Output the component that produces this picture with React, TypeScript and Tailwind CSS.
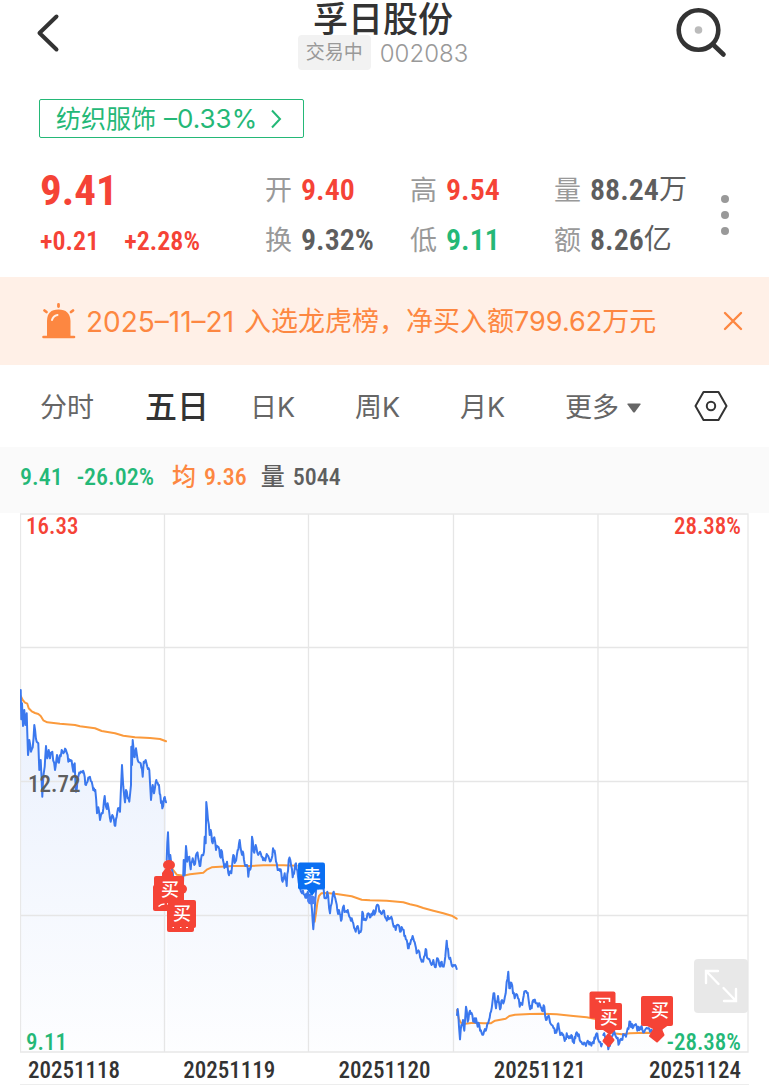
import React from "react";

type Point = [number, number];

const NUM = "font-['Liberation_Sans_Narrow','Roboto_Condensed','Roboto','Noto_Sans_CJK_SC',sans-serif]";

/* Points are stored in thirds of a chart unit, relative to an origin. */
function series(ox: number, oy: number, raw: string): Point[] {
  return raw
    .trim()
    .split(/\s+/)
    .map((pair) => {
      const [x, y] = pair.split(",").map(Number);
      return [ox + x / 3, oy + y / 3] as Point;
    });
}

function toPath(points: Point[]): string {
  return points.map(([x, y], i) => `${i ? "L" : "M"}${x.toFixed(1)} ${y.toFixed(1)}`).join("");
}

/* Adds tick-level movement between the recorded turning points. */
function withTicks(points: Point[], seed: number): Point[] {
  let s = seed;
  const next = () => {
    s = (s * 16807) % 2147483647;
    return s / 2147483647 - 0.5;
  };
  const out: Point[] = [points[0]];
  for (let i = 1; i < points.length; i++) {
    const [x0, y0] = points[i - 1];
    const [x1, y1] = points[i];
    const steps = Math.max(1, Math.round((x1 - x0) / 0.8));
    for (let k = 1; k < steps; k++) {
      const t = k / steps;
      out.push([x0 + (x1 - x0) * t, y0 + (y1 - y0) * t + next() * 7]);
    }
    out.push([x1, y1]);
  }
  return out;
}

const PRICE: Point[][] = [
  series(0, 670, "62,60 64,148 66,100 69,168 73,120 76,165 80,130 84,255 88,210 93,245 98,232 103,165 110,215 115,220 118,300 122,270 127,380 131,310 134,290 138,228 142,265 146,240 150,265 157,245 165,300 171,255 177,278 185,240 198,240 205,275 212,270 220,305 224,280 228,365 235,320 245,305 252,310 258,345 267,322 275,335 280,360 286,360 291,430 295,412 300,450 308,430 314,378 318,410 325,410 332,455 337,435 344,467 350,440 354,415 360,425 366,285 370,350 375,397 378,360 383,385 388,395 393,345 394,230 396,285 398,210 402,260 408,235 415,275 422,280 428,320 431,275 437,270 442,290 448,300 453,390 458,345 462,370 469,330 475,345 481,375 487,415 492,385 498,397"),
  series(150, 780, "50,240 54,157 58,245 61,225 66,270 72,310 84,330 99,310 101,240 104,285 108,198 112,245 118,230 122,268 128,235 133,255 140,220 145,235 151,258 157,225 162,215 164,170 167,190 169,66 174,120 179,165 182,150 188,190 193,172 198,210 205,200 210,228 216,215 221,250 228,260 231,245 237,286 244,280 250,225 256,245 263,210 269,180 274,215 280,220 286,258 291,255 295,290 299,265 303,260 306,170 311,215 317,195 322,218 330,215 337,230 344,240 350,222 357,235 365,235 369,205 376,225 380,250 386,270 392,268 398,305 404,280 410,318 416,240 421,240 428,292 434,265 438,250 444,290 450,320 456,340 464,345 480,345"),
  series(300, 850, "30,135 36,180 40,238 46,150 50,110 60,100 68,110 76,145 82,125 90,190 95,160 101,125 106,145 112,180 119,190 123,212 129,172 136,185 143,180 148,200 155,205 160,220 167,245 171,230 177,250 184,240 187,185 193,210 200,205 205,190 212,200 219,185 225,190 231,165 238,185 245,192 252,182 258,205 266,208 274,200 281,230 287,240 295,225 300,245 307,235 313,258 320,270 326,295 333,270 340,265 346,285 350,310 358,305 365,335 372,320 377,297 383,325 392,340 400,330 407,352 411,325 418,345 425,335 431,350 436,320 440,272 446,320 453,335 460,345 470,357"),
  series(440, 940, "51,225 53,207 57,260 60,298 64,255 69,240 73,272 78,200 83,245 90,212 97,225 102,245 108,235 113,260 118,255 125,280 132,275 140,262 147,240 153,215 158,180 163,160 168,205 174,168 180,208 186,180 192,185 197,160 200,125 205,95 208,145 214,128 219,160 224,175 229,162 234,175 239,200 247,195 253,155 263,158 268,195 275,205 280,180 287,190 294,200 300,195 306,212 313,200 318,240 324,230 328,235 335,255 343,265 349,278 355,250 361,285 367,285 374,303 380,280 387,295 394,285 400,305 406,295 412,280 419,300 427,312 435,310 443,302 452,312 461,310 470,280 476,302 486,312"),
  series(580, 940, "70,285 78,300 85,328 92,300 100,280 108,290 118,310 125,300 132,285 138,290 143,265 151,245 158,265 165,255 172,272 180,262 187,268 195,270 210,275 225,280 240,270 248,262"),
];

const AVERAGE: Point[][] = [
  series(0, 670, "62,78 68,90 75,98 82,101 86,115 95,124 105,129 115,132 122,138 130,151 142,157 180,161 225,165 240,169 285,175 305,183 345,190 370,197 405,202 450,204 480,207 498,214"),
  series(150, 780, "55,250 70,270 80,284 100,287 120,283 160,278 172,268 185,262 210,260 250,258 300,258 340,256 400,256 440,257"),
  series(300, 850, "44,215 48,190 52,160 57,138 64,130 80,129 110,132 155,139 185,149 210,151 260,152 310,157 330,163 350,167 370,174 400,182 430,190 455,197 470,206"),
  series(440, 940, "51,210 56,235 62,248 75,251 100,248 130,250 152,250 165,242 197,236 208,228 225,224 270,222 310,221 350,223 400,228 440,232 470,238"),
  series(580, 940, "80,272 100,280 125,283 150,280 200,278 225,280"),
];

const TICKS = PRICE.map((p, i) => withTicks(p, 911 + i * 77));

const RED = "#f54336";
const BLUE = "#0a6ff2";

function Pin({ x, y, w = 27, h = 27, color = RED }: { x: number; y: number; w?: number; h?: number; color?: string }) {
  return <rect x={x} y={y} width={w} height={h} rx="2" fill={color} />;
}

function PinLabel({ x, y, children }: { x: number; y: number; children: string }) {
  return (
    <text x={x} y={y} textAnchor="middle" fill="#fff" fontSize="18" fontWeight="500">
      {children}
    </text>
  );
}

function Chart() {
  return (
    <svg viewBox="20 513 729 540" className="block w-full" role="img" aria-label="五日走势">
      <defs>
        <linearGradient id="area" gradientUnits="userSpaceOnUse" x1="0" y1="690" x2="0" y2="1052">
          <stop offset="0" stopColor="#3b78ee" stopOpacity="0.11" />
          <stop offset="1" stopColor="#3b78ee" stopOpacity="0.01" />
        </linearGradient>
      </defs>
      {TICKS.map((p, i) => (
        <path key={i} d={`${toPath(p)}L${p[p.length - 1][0]} 1052L${p[0][0]} 1052Z`} fill="url(#area)" />
      ))}
      <g stroke="#e6e6e6" strokeWidth="1.3" fill="none">
        <path d="M20 647.5H748M20 781.5H748M20 915.5H748M164.5 514V1052M308.5 514V1052M453.5 514V1052M598 514V1052" />
        <path d="M20.5 514H748V1052H20.5Z" stroke="#e8e8e8" />
      </g>
      <g fill="none" strokeLinejoin="round" strokeLinecap="round">
        {AVERAGE.map((p, i) => (
          <path key={i} d={toPath(p)} stroke="#fb9a3c" strokeWidth="2" />
        ))}
        {TICKS.map((p, i) => (
          <path key={i} d={toPath(p)} stroke="#3b78ee" strokeWidth="2" />
        ))}
      </g>
      <g fill={RED}>
        <ellipse cx="169" cy="865" rx="6" ry="5" />
        <path d="M162 878V873L165 869H170L173 873V878Z" />
        <circle cx="182.500" cy="889" r="4.500" />
        <Pin x={153} y={885} w={24} h={26} />
        <Pin x={154} y={876} w={30} h={29} />
        <PinLabel x={170} y={896}>买</PinLabel>
        <path d="M158.500 906.500Q161 904 164.500 904M167 904H168.500" stroke="#fff" strokeWidth="1.400" fill="none" />
        <Pin x={167} y={904} w={27} h={28} />
        <Pin x={168} y={900} w={28} h={28} />
        <PinLabel x={182} y={920}>买</PinLabel>
        <path d="M172.500 927.500H174M180 927.500H181.500M186 927.500H188" stroke="#fff" strokeWidth="1" />
      </g>
      <g>
        <path d="M306 888H318L312 896Z" fill={BLUE} />
        <circle cx="311.500" cy="900" r="4.500" fill="#4a80f4" />
        <Pin x={298} y={862.5} color={BLUE} />
        <PinLabel x={312} y={882.5}>卖</PinLabel>
      </g>
      <g fill={RED}>
        <path d="M599 1027H619L610 1035Z" />
        <path d="M608.500 1035L613 1040L608.500 1045.500L604 1041Z" stroke={RED} strokeLinejoin="round" strokeWidth="3" />
        <Pin x={589.5} y={991.5} w={26} h={27} />
        <path d="M595.500 998.500H609.500V1002M599 1001L601 1002.500M604 1001V1003" stroke="#fff" strokeWidth="1.600" fill="none" />
        <Pin x={595} y={1003} w={27} h={27} />
        <PinLabel x={609} y={1024}>买</PinLabel>
        <path d="M643 1024H670L659 1032Z" />
        <path d="M650 1036L654 1029.500H661L663.500 1035L657 1041.500Z" stroke={RED} strokeLinejoin="round" strokeWidth="2" />
        <Pin x={641} y={996} w={32} h={30} />
        <PinLabel x={660} y={1017}>买</PinLabel>
      </g>
    </svg>
  );
}

function Quote({ label, value, unit, tone }: { label: string; value: string; unit?: string; tone: string }) {
  return (
    <div className="flex h-[50px] items-center gap-[9px] whitespace-nowrap">
      <dt className="pt-0.5 text-[27px] text-[#999]">{label}</dt>
      <dd className={`flex items-center pb-0.5 text-[30px] font-semibold ${NUM} ${tone}`}>
        {value}
        {unit && <span className="pt-0.5 text-[28px] font-normal">{unit}</span>}
      </dd>
    </div>
  );
}

const TABS = ["分时", "五日", "日K", "周K", "月K"];
const DATES = ["20251118", "20251119", "20251120", "20251121", "20251124"];

export default function App() {
  return (
    <main className="w-full bg-white font-['Inter','Noto_Sans_CJK_SC',sans-serif] text-[#333]">
      <header className="flex items-start justify-between pr-[42px] pl-9">
        <button aria-label="返回" className="w-[55px] pt-3">
          <svg width="26" height="42" viewBox="0 0 26 42" fill="none" stroke="#333" strokeWidth="4" strokeLinecap="round" strokeLinejoin="round">
            <path d="M20.500 4.500L3.500 21L20.500 37.500" />
          </svg>
        </button>
        <div className="flex flex-col items-center">
          <h1 className="h-[35px] text-[35px] leading-[38px] font-medium">孚日股份</h1>
          <div className="flex items-center gap-[9px] text-[#999]">
            <span className="flex h-[35px] items-center rounded-[4px] bg-[#f2f2f2] px-2 pt-0.5 text-[19px]">交易中</span>
            <span className="pt-0.5 text-2xl font-light">002083</span>
          </div>
        </div>
        <button aria-label="搜索" className="pt-1.5">
          <svg width="52" height="54" viewBox="0 0 52 54" fill="none" stroke="#333" strokeWidth="4.600">
            <circle cx="23.500" cy="24" r="19.800" />
            <path d="M38 38.500L48.500 48.500" strokeLinecap="round" />
            <circle cx="23.500" cy="24" r="3.800" fill="#bbb" stroke="none" />
          </svg>
        </button>
      </header>

      <button className="mt-[29px] ml-[39px] flex h-[39px] items-center gap-2 rounded-[2px] border border-solid border-[#24b877] pr-[18px] pl-4 text-[25px] text-[#24b877]">
        <span className="pt-0.5">纺织服饰</span>
        <span className="text-[26px]">–0.33%</span>
        <svg width="20" height="22" viewBox="0 0 20 22" fill="none" stroke="currentColor" strokeWidth="2">
          <path d="M7 2.500L15 11L7 19.500" />
        </svg>
      </button>

      <section className="flex items-center pt-[27px] pr-10 pb-3 pl-10">
        <div className={`w-[225px] text-[#f54336] ${NUM}`}>
          <p className="h-[50px] text-[43px] leading-[50px] font-bold">9.41</p>
          <p className="flex h-[50px] w-40 items-center justify-between pt-0.5 text-[26px] font-semibold">
            <span>+0.21</span>
            <span>+2.28%</span>
          </p>
        </div>
        <dl className="grid grow grid-cols-[145px_144px_auto]">
          <Quote label="开" value="9.40" tone="text-[#f54336]" />
          <Quote label="高" value="9.54" tone="text-[#f54336]" />
          <Quote label="量" value="88.24" unit="万" tone="text-[#5e5e5e]" />
          <Quote label="换" value="9.32%" tone="text-[#5e5e5e]" />
          <Quote label="低" value="9.11" tone="text-[#24b877]" />
          <Quote label="额" value="8.26" unit="亿" tone="text-[#5e5e5e]" />
        </dl>
        <button aria-label="更多行情" className="flex flex-col gap-2">
          <span className="size-2 rounded-full bg-[#999]" />
          <span className="size-2 rounded-full bg-[#999]" />
          <span className="size-2 rounded-full bg-[#999]" />
        </button>
      </section>

      <section className="flex h-[88px] items-center bg-[#fff0e7] pr-[26px] pl-[42px] text-[#fd8741]">
        <svg width="34" height="36" viewBox="0 0 34 36" fill="none">
          <path d="M5 33V18Q5 6.500 16.500 6.500T28.500 18V33Z" fill="currentColor" />
          <path d="M1.500 34H32" stroke="currentColor" strokeWidth="2.600" strokeLinecap="round" />
          <path d="M16.500 1.500V3.500M2.500 7.500L4.500 9M31 7.500L29 9" stroke="currentColor" strokeWidth="2.800" strokeLinecap="round" />
          <path d="M10 17Q11 13 15.500 12" stroke="#fff0e7" strokeWidth="2" strokeLinecap="round" />
        </svg>
        <p className="ml-2.5 flex grow items-center gap-2.5 pt-0.5 text-[27px] whitespace-nowrap">
          <time className="text-[28px]">2025–11–21</time>
          <span>入选龙虎榜，净买入额799.62万元</span>
        </p>
        <button aria-label="关闭">
          <svg width="20" height="20" viewBox="0 0 20 20" stroke="currentColor" strokeWidth="2.400" strokeLinecap="round">
            <path d="M2 2L18 18M18 2L2 18" />
          </svg>
        </button>
      </section>

      <nav className="grid h-[82px] grid-cols-[repeat(6,1fr)_58px] items-center justify-items-start pr-[41px] pl-10 text-[27px] text-[#666]">
        {TABS.map((t) => (
          <button key={t} className={t === "五日" ? "pt-0.5 text-[32px] font-medium text-[#333]" : "pt-1"}>
            {t}
          </button>
        ))}
        <button className="flex items-center gap-2 pt-1">
          更多
          <svg width="14" height="10" viewBox="0 0 14 10" fill="currentColor">
            <path d="M1 0.500H13Q14 0.500 13.500 1.500L8 9Q7 10 6 9L0.500 1.500Q0 0.500 1 0.500Z" />
          </svg>
        </button>
        <button aria-label="图表设置" className="justify-self-end">
          <svg width="34" height="32" viewBox="0 0 34 32" fill="none" stroke="#333" strokeWidth="2" strokeLinejoin="round">
            <path d="M9.500 2H24.500L32.500 16L24.500 30H9.500L1.500 16Z" />
            <circle cx="17" cy="16" r="4.200" />
          </svg>
        </button>
      </nav>

      <p className={`flex h-[66px] items-center bg-[#fafafa] pb-1.5 pl-5 text-[24px] font-medium whitespace-pre text-[#5e5e5e] ${NUM}`}>
        <span className="text-[#24b877]">9.41</span>
        <span className="ml-3.5 text-[#24b877]">-26.02%</span>
        <span className="ml-[18px] flex gap-2 text-[#fd8741]">
          <span>均</span>
          <span>9.36</span>
        </span>
        <span className="ml-3.5 flex gap-2">
          <span>量</span>
          <span>5044</span>
        </span>
      </p>

      <section className={`relative mx-5 text-[23px] leading-6 font-medium ${NUM}`}>
        <Chart />
        <span className="absolute top-0.5 left-1.5 text-[#f54336]">16.33</span>
        <span className="absolute top-0.5 right-2 text-[#f54336]">28.38%</span>
        <span className="absolute top-1/2 left-2 -mt-2.5 text-[#5e5e5e]">12.72</span>
        <span className="absolute -bottom-0.5 left-1.5 text-[#24b877]">9.11</span>
        <span className="absolute right-2 -bottom-0.5 text-[#24b877]">-28.38%</span>
        <button aria-label="全屏" className="absolute right-px bottom-10 flex size-[54px] items-center justify-center rounded-[4px] bg-[#e5e5e5]/90">
          <svg width="36" height="36" viewBox="0 0 36 36" fill="none" stroke="#fff" strokeWidth="2.400" strokeLinecap="round">
            <path d="M15 3H3V15M3 3L15.500 16M21 33H33V21M20.500 20L33 33" />
          </svg>
        </button>
      </section>

      <div className={`mx-5 flex h-8 justify-between border-b border-[#ededed] px-2 text-[23px] leading-[35px] font-medium text-[#333] ${NUM}`}>
        {DATES.map((d) => (
          <time key={d}>{d}</time>
        ))}
      </div>
    </main>
  );
}
